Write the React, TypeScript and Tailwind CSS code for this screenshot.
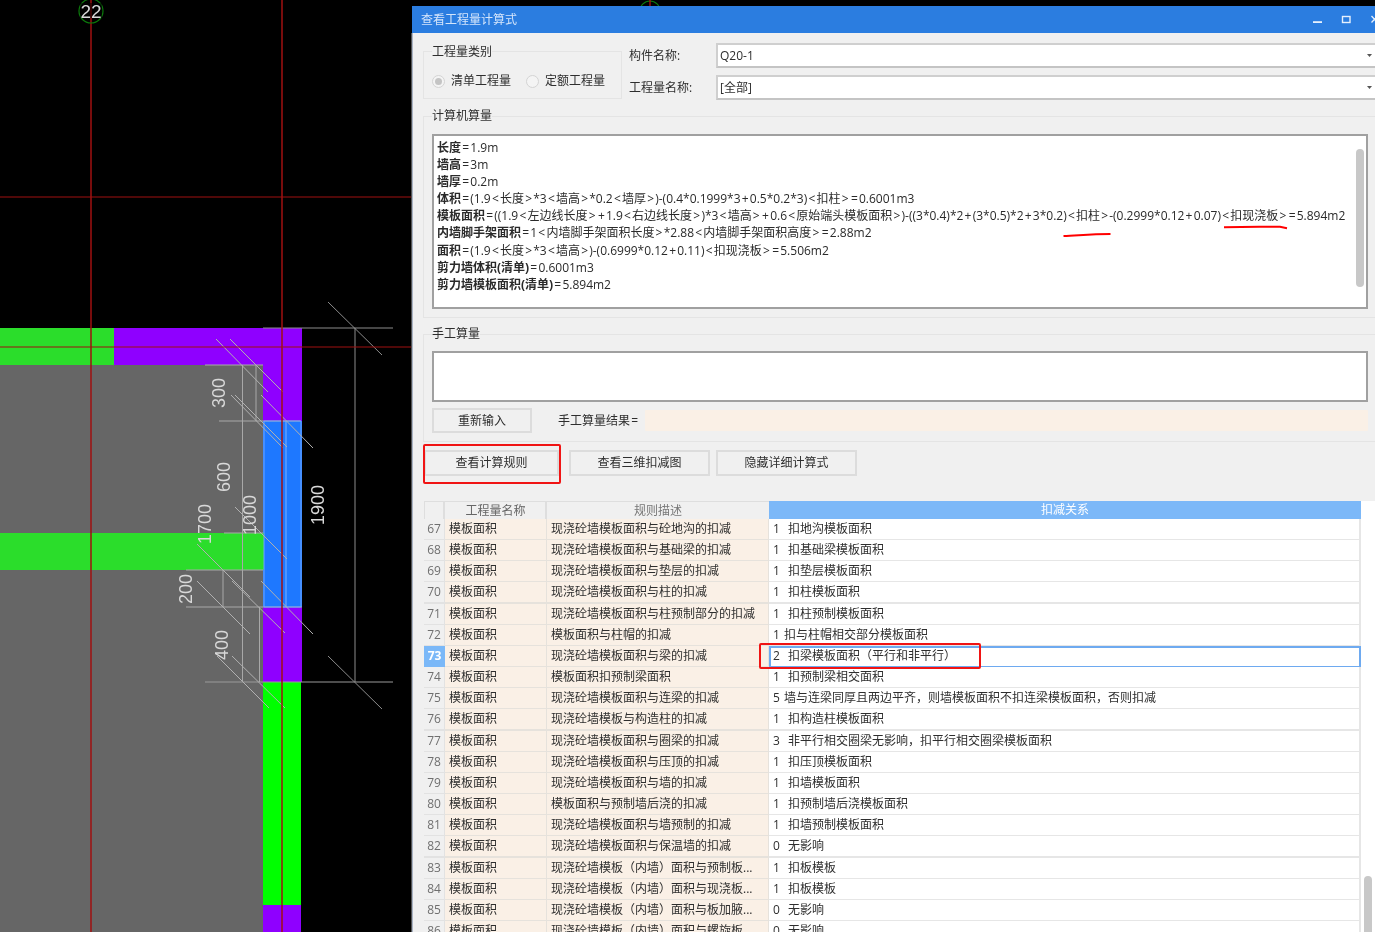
import React from "react";

const seg: [number, number, number, number, string][] = [
  [263, 328, 393, 328, "#8c8c8c"],
  [205, 365, 263, 365, "#a8a8a8"],
  [219, 421, 301, 421, "#a8a8a8"],
  [224, 533, 263, 533, "#a8a8a8"],
  [186, 570, 263, 570, "#a8a8a8"],
  [186, 607, 302, 607, "#a8a8a8"],
  [205, 682, 393, 682, "#9a9a9a"],
  [355, 328, 355, 682, "#8c8c8c"],
  [242.5, 365, 242.5, 682, "#a8a8a8"],
  [256, 365, 256, 421, "#a8a8a8"],
  [259.5, 607, 259.5, 682, "#a8a8a8"],
  [223, 570, 223, 607, "#a8a8a8"],
  [286, 421, 286, 607, "#7fb0ff"],
  [264, 421, 264, 607, "#6ca6ff"],
  [301, 421, 301, 607, "#6ca6ff"],
  [264, 421, 301, 421, "#6ca6ff"],
  [264, 607, 301, 607, "#6ca6ff"],
  [328, 302, 382, 355, "#8c8c8c"],
  [328, 656, 382, 709, "#8c8c8c"],
  [216, 339, 268, 392, "#b0b0b0"],
  [230, 339, 283, 392, "#b0b0b0"],
  [261, 395, 313, 448, "#b0b0b0"],
  [231, 395, 283, 448, "#b0b0b0"],
  [235, 395, 287, 447, "#b0b0b0"],
  [235, 507, 287, 559, "#b0b0b0"],
  [197, 544, 250, 597, "#b0b0b0"],
  [197, 581, 250, 634, "#b0b0b0"],
  [232, 581, 285, 633, "#b0b0b0"],
  [261, 581, 313, 634, "#b0b0b0"],
  [217, 656, 269, 708, "#b0b0b0"],
  [232, 656, 285, 708, "#b0b0b0"],
];

const dims: [string, number, number][] = [
  ["300", 219, 393],
  ["600", 224, 477],
  ["1000", 250, 515],
  ["1700", 205, 524],
  ["200", 186, 589],
  ["400", 222, 645],
  ["1900", 318, 505],
];

function Cad() {
  return (
    <svg width="412" height="932" viewBox="0 0 412 932" className="block shrink-0">
      <rect width="412" height="932" fill="#000" />
      <rect x="0" y="365" width="263" height="567" fill="#666666" />
      <rect x="0" y="328" width="114" height="37" fill="#2bdd2b" />
      <rect x="114" y="328" width="188" height="37" fill="#8f00ff" />
      <rect x="263" y="328" width="39" height="93" fill="#8f00ff" />
      <rect x="263" y="421" width="39" height="186" fill="#1e78ff" />
      <rect x="263" y="607" width="39" height="75" fill="#8f00ff" />
      <rect x="263" y="682" width="38" height="223" fill="#00ff00" />
      <rect x="263" y="905" width="38" height="27" fill="#8f00ff" />
      <rect x="0" y="533" width="264" height="37" fill="#2bdd2b" />
      {seg.map(([a, b, c, d, s], i) => (
        <line key={i} x1={a} y1={b} x2={c} y2={d} stroke={s} strokeWidth="1" />
      ))}
      <line x1="91" y1="0" x2="91" y2="932" stroke="#a01010" strokeWidth="1.5" />
      <line x1="282" y1="0" x2="282" y2="932" stroke="#a01010" strokeWidth="1.5" />
      <line x1="0" y1="197" x2="412" y2="197" stroke="#a01010" strokeWidth="1.2" />
      <line x1="0" y1="347" x2="412" y2="347" stroke="#a01010" strokeWidth="1.2" />
      <circle cx="91" cy="11" r="12" fill="none" stroke="#0b7a0b" strokeWidth="1.2" />
      <rect x="80" y="3" width="22" height="15" fill="#000" opacity="0.55" />
      <text x="91" y="18" textAnchor="middle" fontSize="19" fill="#d8d8d8" fontFamily="'Liberation Sans',sans-serif">22</text>
      {dims.map(([t, x, y]) => (
        <text
          key={t}
          x={x}
          y={y}
          textAnchor="middle"
          dominantBaseline="central"
          transform={`rotate(-90 ${x} ${y})`}
          fontSize="18"
          fill="#d8d8d8"
          fontFamily="'Liberation Sans',sans-serif"
        >
          {t}
        </text>
      ))}
      <line x1="411.5" y1="33" x2="411.5" y2="932" stroke="#555" strokeWidth="1" />
    </svg>
  );
}

function Caret() {
  return (
    <svg width="5" height="3" viewBox="0 0 5 3" className="shrink-0">
      <path d="M0 0h5L2.5 3z" fill="#555" />
    </svg>
  );
}

function Radio({ on, label }: { on?: boolean; label: string }) {
  return (
    <div className="flex items-center">
      <span className="flex h-[13px] w-[13px] items-center justify-center rounded-full border border-[#d4d4d4] bg-[#f4f4f4]">
        {on ? <span className="h-[7px] w-[7px] rounded-full bg-[#c4c4c4]" /> : null}
      </span>
      <span className="ml-[6px]">{label}</span>
    </div>
  );
}

function Field({ label, value }: { label: string; value: string }) {
  return (
    <div className="flex h-[25px] items-center">
      <span className="w-[87px] shrink-0 pt-px">{label}</span>
      <div className="flex h-[25px] flex-1 items-center justify-between border-2 border-b-[#c4c4c4] border-l-[#cfcfcf] border-r-0 border-t-[#cfcfcf] bg-white pl-[2px] pr-[3px]">
        <span className="pt-px">{value}</span>
        <Caret />
      </div>
    </div>
  );
}

function Formula({ text }: { text: string }) {
  const parts = text.split(/([<>=+])/);
  return (
    <>
      {parts.map((p, i) =>
        i % 2 === 1 ? (
          <span key={i} className="px-[1.2px]">
            {p}
          </span>
        ) : (
          <React.Fragment key={i}>{p}</React.Fragment>
        ),
      )}
    </>
  );
}

const lines: [string, string][] = [
  ["长度", "=1.9m"],
  ["墙高", "=3m"],
  ["墙厚", "=0.2m"],
  ["体积", "=(1.9<长度>*3<墙高>*0.2<墙厚>)-(0.4*0.1999*3+0.5*0.2*3)<扣柱>=0.6001m3"],
  ["模板面积", "=((1.9<左边线长度>+1.9<右边线长度>)*3<墙高>+0.6<原始端头模板面积>)-((3*0.4)*2+(3*0.5)*2+3*0.2)<扣柱>-(0.2999*0.12+0.07)<扣现浇板>=5.894m2"],
  ["内墙脚手架面积", "=1<内墙脚手架面积长度>*2.88<内墙脚手架面积高度>=2.88m2"],
  ["面积", "=(1.9<长度>*3<墙高>)-(0.6999*0.12+0.11)<扣现浇板>=5.506m2"],
  ["剪力墙体积(清单)", "=0.6001m3"],
  ["剪力墙模板面积(清单)", "=5.894m2"],
];

type Row = { id: number; desc: string; n: string; text: string; tight?: boolean };
const rows: Row[] = [
  { id: 67, desc: "现浇砼墙模板面积与砼地沟的扣减", n: "1", text: "扣地沟模板面积" },
  { id: 68, desc: "现浇砼墙模板面积与基础梁的扣减", n: "1", text: "扣基础梁模板面积" },
  { id: 69, desc: "现浇砼墙模板面积与垫层的扣减", n: "1", text: "扣垫层模板面积" },
  { id: 70, desc: "现浇砼墙模板面积与柱的扣减", n: "1", text: "扣柱模板面积" },
  { id: 71, desc: "现浇砼墙模板面积与柱预制部分的扣减", n: "1", text: "扣柱预制模板面积" },
  { id: 72, desc: "模板面积与柱帽的扣减", n: "1", text: "扣与柱帽相交部分模板面积", tight: true },
  { id: 73, desc: "现浇砼墙模板面积与梁的扣减", n: "2", text: "扣梁模板面积（平行和非平行）" },
  { id: 74, desc: "模板面积扣预制梁面积", n: "1", text: "扣预制梁相交面积" },
  { id: 75, desc: "现浇砼墙模板面积与连梁的扣减", n: "5", text: "墙与连梁同厚且两边平齐，则墙模板面积不扣连梁模板面积，否则扣减", tight: true },
  { id: 76, desc: "现浇砼墙模板与构造柱的扣减", n: "1", text: "扣构造柱模板面积" },
  { id: 77, desc: "现浇砼墙模板面积与圈梁的扣减", n: "3", text: "非平行相交圈梁无影响，扣平行相交圈梁模板面积" },
  { id: 78, desc: "现浇砼墙模板面积与压顶的扣减", n: "1", text: "扣压顶模板面积" },
  { id: 79, desc: "现浇砼墙模板面积与墙的扣减", n: "1", text: "扣墙模板面积" },
  { id: 80, desc: "模板面积与预制墙后浇的扣减", n: "1", text: "扣预制墙后浇模板面积" },
  { id: 81, desc: "现浇砼墙模板面积与墙预制的扣减", n: "1", text: "扣墙预制模板面积" },
  { id: 82, desc: "现浇砼墙模板面积与保温墙的扣减", n: "0", text: "无影响" },
  { id: 83, desc: "现浇砼墙模板（内墙）面积与预制板...", n: "1", text: "扣板模板" },
  { id: 84, desc: "现浇砼墙模板（内墙）面积与现浇板...", n: "1", text: "扣板模板" },
  { id: 85, desc: "现浇砼墙模板（内墙）面积与板加腋...", n: "0", text: "无影响" },
  { id: 86, desc: "现浇砼墙模板（内墙）面积与螺旋板...", n: "0", text: "无影响" },
];

function TableRow({ r }: { r: Row }) {
  const sel = r.id === 73;
  return (
    <div className="grid h-[21.16px] grid-cols-[21px_102px_222px_592px] whitespace-nowrap leading-[20px]">
      <div className={sel ? "bg-[#7ab8f8] text-center font-bold text-white" : "border-b-2 border-r border-[#e2e2e2] bg-[#f0f0f0] text-center text-[#6f6f6f]"}>
        {r.id}
      </div>
      <div className="border-b-2 border-r border-[#e6e2dc] bg-[#faf0e6] pl-[4px]">模板面积</div>
      <div className="border-b-2 border-r border-[#e6e2dc] bg-[#faf0e6] pl-[4px]">{r.desc}</div>
      <div className={sel ? "flex border-2 border-[#6eaaf0] bg-white pl-[2px] leading-[16px]" : "flex border-b-2 border-r-2 border-[#e6e6e6] bg-white pl-[4px]"}>
        <span className={r.tight ? "w-[11px] shrink-0" : "w-[15px] shrink-0"}>{r.n}</span>
        <span>{r.text}</span>
      </div>
    </div>
  );
}

function Btn({ label, cls }: { label: string; cls: string }) {
  return <div className={`${cls} flex h-[26px] items-center justify-center border-2 border-[#dcdcdc] bg-[#f0f0f0]`}>{label}</div>;
}

export default function App() {
  return (
    <div className="relative flex h-[932px] w-[1375px] overflow-hidden bg-black font-['Open_Sans','Noto_Sans_CJK_SC',sans-serif] text-[12px] text-[#2e2e2e] blur-[0.5px]">
      <Cad />
      <div className="flex min-w-0 flex-1 flex-col">
        <div className="h-[6px] shrink-0 bg-black">
          <svg width="24" height="6" viewBox="0 0 24 6" className="ml-[226px] block">
            <circle cx="12" cy="11" r="10" fill="none" stroke="#0b7a0b" strokeWidth="1.2" />
            <line x1="12" y1="0" x2="12" y2="6" stroke="#c01010" strokeWidth="1.2" />
          </svg>
        </div>
        <div className="flex h-[27px] shrink-0 items-center justify-between bg-[#2b7de0] pl-[9px] text-[#d4e5fb]">
          <span>查看工程量计算式</span>
          <svg width="75" height="27" viewBox="0 0 75 27" className="shrink-0">
            <rect x="13" y="15.2" width="9" height="1.8" fill="#e6f0fd" />
            <rect x="42.5" y="10.5" width="7.5" height="6" fill="none" stroke="#e6f0fd" strokeWidth="1.4" />
            <path d="M71.5 10l6 6.5M77.5 10l-6 6.5" stroke="#e6f0fd" strokeWidth="1.3" />
          </svg>
        </div>
        <div className="flex min-h-0 flex-1 flex-col overflow-hidden border-l border-[#a9b3c4] bg-[#f0f0f0] pt-[10px]">
          <div className="flex shrink-0">
            <fieldset className="ml-[10px] h-[56px] w-[199px] shrink-0 border border-[#e4e4e4] px-[8px]">
              <legend className="h-[16px] pt-px leading-[16px]">工程量类别</legend>
              <div className="mt-[13px] flex gap-[15px]">
                <Radio on label="清单工程量" />
                <Radio label="定额工程量" />
              </div>
            </fieldset>
            <div className="ml-[7px] flex flex-1 flex-col gap-[7px]">
              <Field label="构件名称:" value="Q20-1" />
              <Field label="工程量名称:" value="[全部]" />
            </div>
          </div>

          <fieldset className="ml-[10px] mt-[8px] h-[210px] shrink-0 border border-[#e4e4e4] px-[8px]">
            <legend className="h-[16px] leading-[16px]">计算机算量</legend>
            <div className="relative mt-[10px] h-[175px] w-[936px] border-2 border-[#a0a0a0] bg-white pl-[3px] pt-[3px] leading-[17.1px] text-[#2a2a2a]">
              {lines.map(([a, b]) => (
                <div key={a} className="whitespace-nowrap">
                  <span className="font-bold">{a}</span>
                  <Formula text={b} />
                </div>
              ))}
              <div className="absolute right-[2px] top-[13px] h-[138px] w-[8px] rounded-[4px] bg-[#c8c8c8]" />
            </div>
          </fieldset>

          <fieldset className="ml-[10px] mt-[8px] h-[116px] shrink-0 border border-[#e4e4e4] px-[8px]">
            <legend className="h-[16px] leading-[16px]">手工算量</legend>
            <div className="mt-[9px] h-[51px] w-[936px] border-2 border-[#a0a0a0] bg-white" />
            <div className="mt-[6px] flex items-center">
              <div className="flex h-[25px] w-[100px] items-center justify-center border-2 border-[#dcdcdc]">重新输入</div>
              <span className="ml-[26px] w-[87px] shrink-0 whitespace-nowrap">
                手工算量结果<span className="px-[1.2px]">=</span>
              </span>
              <div className="h-[21px] w-[723px] rounded-[1px] bg-[#faf0e6]" />
            </div>
          </fieldset>

          <div className="mt-[8px] flex shrink-0">
            <Btn cls="ml-[11px] w-[135px]" label="查看计算规则" />
            <Btn cls="ml-[10px] w-[141px]" label="查看三维扣减图" />
            <Btn cls="ml-[6px] w-[141px]" label="隐藏详细计算式" />
          </div>

          <div className="ml-[11px] mt-[25px] flex min-h-0 flex-1 overflow-hidden">
            <div className="w-[937px] shrink-0">
              <div className="grid h-[18px] grid-cols-[21px_102px_222px_592px] leading-[17px]">
                <div className="border border-r-2 border-[#dedede] bg-[#f0f0f0]" />
                <div className="border-y border-r-2 border-[#dedede] bg-[#f0f0f0] pl-px text-center text-[#666]">工程量名称</div>
                <div className="border-y border-[#dedede] bg-[#f0f0f0] text-center text-[#777]">规则描述</div>
                <div className="bg-[#7cb8f8] text-center text-white">扣减关系</div>
              </div>
              {rows.map((r) => (
                <TableRow key={r.id} r={r} />
              ))}
            </div>
            <div className="flex-1 bg-white pl-[3px] pt-[375px]">
              <div className="h-[80px] w-[8px] rounded-[4px] bg-[#c8c8c8]" />
            </div>
          </div>
        </div>
      </div>

      <div className="absolute left-[423px] top-[444px] h-[40px] w-[138px] rounded-[2px] border-2 border-[#f01414]" />
      <div className="absolute left-[759px] top-[643px] h-[26px] w-[222px] rounded-[2px] border-2 border-[#f01414]" />
      <svg width="240" height="16" viewBox="0 0 240 16" className="absolute left-[1060px] top-[224px]">
        <path d="M3.5 12C18 11.5 30 10 50.5 10" fill="none" stroke="#f00" strokeWidth="2" />
        <path d="M164 3.2C185 2.5 205 2.6 220 2.8L227 4.3" fill="none" stroke="#f00" strokeWidth="2" />
      </svg>
    </div>
  );
}
